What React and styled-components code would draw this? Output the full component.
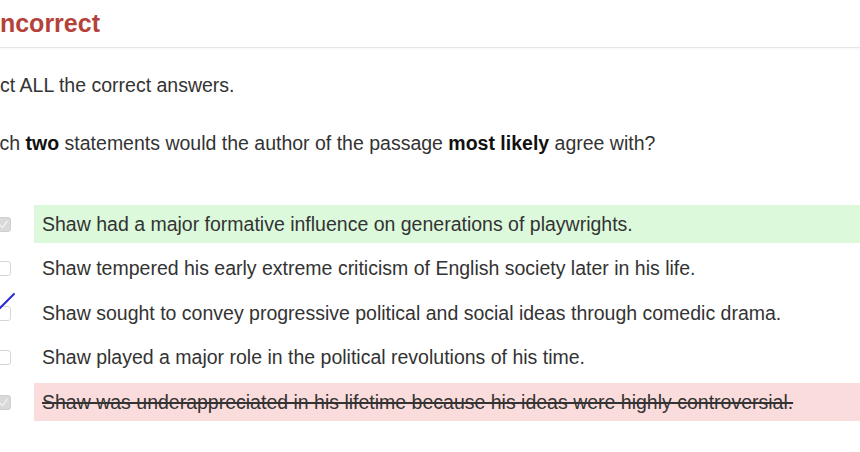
import React from "react";
import styled, { createGlobalStyle } from "styled-components";

const Global = createGlobalStyle`
  html, body { margin: 0; padding: 0; background: #fff; overflow: hidden; }
  body { font-family: "Liberation Sans", Arial, sans-serif; }
`;

const Page = styled.div`
  width: 899px;
  margin-left: -39px;
  display: flex;
  flex-direction: column;
`;

const Header = styled.header`
  height: 38px;
  padding: 9px 0 0 32px;
  border-bottom: 1px solid #e6e6e6;
  box-shadow: 0 1px 2px rgba(0, 0, 0, 0.04);
`;

const Title = styled.h1`
  margin: 0;
  font-size: 25px;
  line-height: 28px;
  font-weight: bold;
  color: #b5423a;
`;

const Instruction = styled.p`
  margin: 26px 0 0 0;
  font-size: 19.5px;
  line-height: 22px;
  color: #333;
`;

const Question = styled.p`
  margin: ${(p) => p.$top}px 0 0 5px;
  font-size: 19.5px;
  line-height: 22px;
  color: #333;
  b { color: #111; }
`;

const Options = styled.ul`
  list-style: none;
  margin: 51px 0 0 0;
  padding: 0;
  display: flex;
  flex-direction: column;
  gap: 6.5px;
`;

const Option = styled.li`
  display: grid;
  grid-template-columns: 38px 1fr;
  align-items: center;
  height: 38px;
  padding-left: 35px;
`;

const BoxCell = styled.div`
  position: relative;
  width: 15px;
  height: 15px;
  justify-self: start;
`;

const Box = styled.span`
  display: block;
  width: 15px;
  height: 15px;
  box-sizing: border-box;
  border-radius: 3px;
  border: 1px solid ${(p) => (p.$checked ? "#cfcfcf" : "#d6d6d6")};
  background: ${(p) => (p.$checked ? "#d9d9d9" : "#fff")};
  display: flex;
  align-items: center;
  justify-content: center;
`;

const Mark = styled.svg`
  position: absolute;
  left: -8px;
  top: -16px;
  overflow: visible;
`;

const Label = styled.div`
  height: 100%;
  display: flex;
  align-items: center;
  padding-left: 8px;
  font-size: 19.5px;
  color: #333;
  background: ${(p) =>
    p.$state === "correct" ? "#dcf9dc" : p.$state === "wrong" ? "#fbdcdc" : "transparent"};
  text-decoration: ${(p) => (p.$state === "wrong" ? "line-through" : "none")};
  text-decoration-thickness: 1.5px;
`;

const options = [
  { text: "Shaw had a major formative influence on generations of playwrights.", state: "correct", checked: true },
  { text: "Shaw tempered his early extreme criticism of English society later in his life.", state: "none" },
  { text: "Shaw sought to convey progressive political and social ideas through comedic drama.", state: "none", pen: true },
  { text: "Shaw played a major role in the political revolutions of his time.", state: "none" },
  { text: "Shaw was underappreciated in his lifetime because his ideas were highly controversial.", state: "wrong", checked: true },
];

export default function App() {
  return (
    <>
      <Global />
      <Page>
        <Header>
          <Title>Incorrect</Title>
        </Header>
        <Instruction>Select ALL the correct answers.</Instruction>
        <Question $top={36}>
          Which <b>two</b> statements would the author of the passage <b>most likely</b> agree with?
        </Question>
        <Options>
          {options.map((o, i) => (
            <Option key={i}>
              <BoxCell>
                <Box $checked={o.checked}>
                  {o.checked && (
                    <svg width="11" height="11" viewBox="0 0 11 11">
                      <path d="M2 6 L4.5 8.5 L9.5 2" fill="none" stroke="#eeeeee" strokeWidth="1.6" />
                    </svg>
                  )}
                </Box>
                {o.pen && (
                  <Mark width="30" height="30" viewBox="0 0 30 30">
                    <path d="M2 8 L12 18 L26 4" fill="none" stroke="#2b2bd6" strokeWidth="2" strokeLinecap="round" />
                  </Mark>
                )}
              </BoxCell>
              <Label $state={o.state}>{o.text}</Label>
            </Option>
          ))}
        </Options>
      </Page>
    </>
  );
}
